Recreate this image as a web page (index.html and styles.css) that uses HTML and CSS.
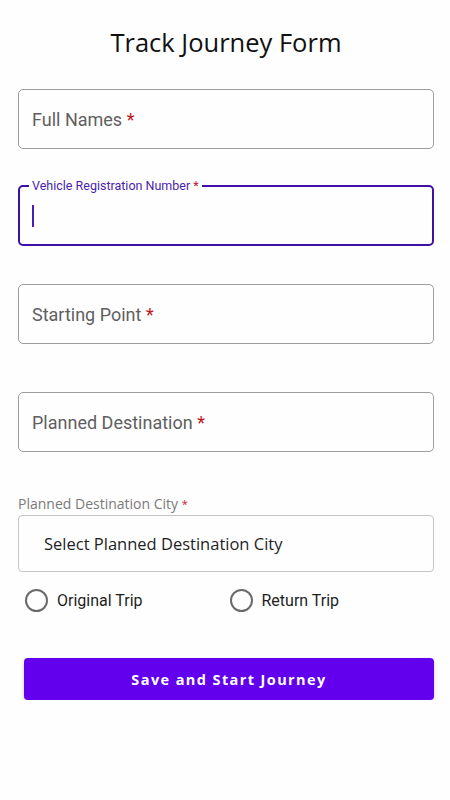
FILE: index.html
```html
<!DOCTYPE html>
<html lang="en">
<head>
  <meta charset="UTF-8">
  <title>Track Journey Form</title>
  <link rel="stylesheet" href="styles.css">
</head>
<body>

<div class="page">
  <h2 class="title">Track Journey Form</h2>

  <form id="journeyForm">
    <div class="field">
      <span class="hint">Full Names <span class="req">*</span></span>
    </div>

    <fieldset class="field focused">
      <legend>Vehicle Registration Number <span class="req">*</span></legend>
      <span class="caret"></span>
    </fieldset>

    <div class="field gap-lg">
      <span class="hint">Starting Point <span class="req">*</span></span>
    </div>

    <div class="field gap-xl">
      <span class="hint">Planned Destination <span class="req">*</span></span>
    </div>

    <label class="select-label">Planned Destination City <span class="req">*</span></label>
    <div class="select-box">Select Planned Destination City</div>

    <div class="radios">
      <label class="radio"><span class="circle"></span>Original Trip</label>
      <label class="radio"><span class="circle"></span>Return Trip</label>
    </div>

    <button type="submit" class="save-btn">Save and Start Journey</button>
  </form>
</div>

</body>
</html>
```

FILE: styles.css
```css
body {
  margin: 0;
  background: #fefefe;
  font-family: Roboto, "Liberation Sans", sans-serif;
}
.page {
  width: 416px;
  padding: 0 16px 0 18px;
}
.title {
  margin: 0;
  padding-top: 25px;
  height: 89px;
  box-sizing: border-box;
  text-align: center;
  font-family: "Open Sans", sans-serif;
  font-weight: 400;
  font-size: 25.5px;
  color: #111;
}
form {
  display: flex;
  flex-direction: column;
}
.field {
  height: 60px;
  box-sizing: border-box;
  border: 1px solid #9e9e9e;
  border-radius: 5px;
  display: flex;
  align-items: center;
  padding: 0 13px;
  margin: 0 0 37px 0;
}
.hint {
  font-size: 18px;
  color: #5f5f5f;
}
.req {
  color: #c0161c;
}
fieldset.focused {
  margin: 0;
  height: 68px;
  border: 2px solid #3f10a8;
  border-radius: 5px;
  padding: 0 12px;
  margin-top: -8px;
  margin-bottom: 38px;
  display: block;
  min-width: 0;
}
fieldset.focused legend {
  font-size: 12.5px;
  color: #4a1fae;
  padding: 0 3px;
  margin-left: -3px;
  line-height: 15px;
}
fieldset.focused .req {
  color: #b0173a;
}
.caret {
  display: block;
  width: 2px;
  height: 22px;
  margin-top: 12px;
  background: #4a1fae;
}
.gap-lg {
  margin-bottom: 48px;
}
.gap-xl {
  margin-bottom: 43px;
}
.select-label {
  font-family: "Open Sans", sans-serif;
  font-size: 14px;
  color: #7a7a7a;
  line-height: 18px;
  margin-bottom: 2px;
}
.select-label .req {
  font-size: 11px;
  vertical-align: top;
}
.select-box {
  height: 57px;
  box-sizing: border-box;
  border: 1px solid #c4c4c4;
  border-radius: 4px;
  display: flex;
  align-items: center;
  padding-left: 25px;
  font-family: "Open Sans", sans-serif;
  font-size: 16.5px;
  color: #1e1e1e;
}
.radios {
  display: flex;
  height: 57px;
  align-items: center;
  padding-left: 7px;
}
.radio {
  display: flex;
  align-items: center;
  width: 208px;
  font-size: 16px;
  color: #1e1e1e;
}
.circle {
  width: 19px;
  height: 19px;
  border: 2px solid #6a6a6a;
  border-radius: 50%;
  margin-right: 9px;
}
.save-btn {
  margin: 29px 0 0 6px;
  height: 42px;
  background: #6200ee;
  color: white;
  border: none;
  border-radius: 4px;
  font-family: "Open Sans", sans-serif;
  font-weight: 700;
  font-size: 14.5px;
  letter-spacing: 1.4px;
  box-shadow: 0 2px 4px rgba(0,0,0,0.2);
  cursor: pointer;
}
```
